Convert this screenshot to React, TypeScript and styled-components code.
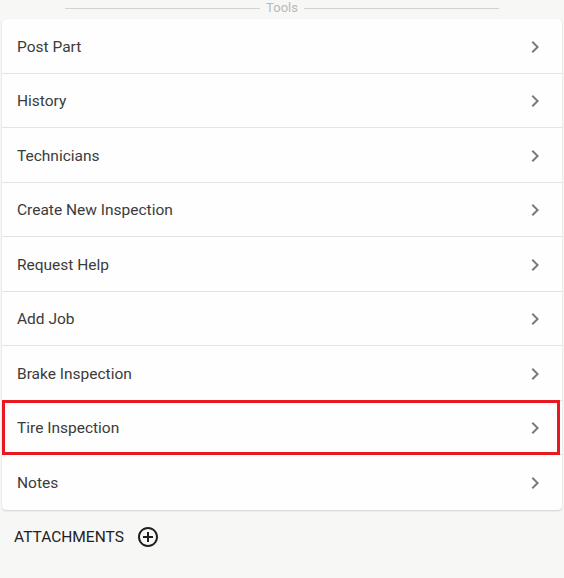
import React from "react";
import styled, { createGlobalStyle } from "styled-components";

const Global = createGlobalStyle`
  html, body { margin: 0; padding: 0; background: #f7f7f6; }
  body { font-family: Roboto, "Liberation Sans", sans-serif; }
`;

const Page = styled.div`
  width: 564px;
  height: 578px;
  display: flex;
  flex-direction: column;
  background: #f7f7f6;
`;

const SectionHeader = styled.div`
  width: 434px;
  height: 16px;
  margin: 0 auto 3px;
  display: flex;
  align-items: center;
  gap: 6px;
  color: #b9b9b9;
  font-size: 13px;
  line-height: 16px;
`;

const Rule = styled.div`
  flex: 1;
  height: 1px;
  background: #d2d2d2;
`;

const Card = styled.div`
  margin: 0 2px;
  background: #fdfefd;
  border-radius: 4px;
  box-shadow: 0 1px 2px rgba(0, 0, 0, 0.14), 0 0 1px rgba(0, 0, 0, 0.12);
  display: flex;
  flex-direction: column;
`;

const Row = styled.div<{ $last?: boolean }>`
  position: relative;
  box-sizing: border-box;
  height: 54.5px;
  display: flex;
  align-items: center;
  justify-content: space-between;
  padding: 2px 15px 0 15px;
  border-bottom: ${(p) => (p.$last ? "none" : "1px solid #e3e4e3")};
  font-size: 15.5px;
  color: #3b3b3b;
`;

const Highlight = styled.div`
  position: absolute;
  top: -1px;
  left: 0;
  right: 2px;
  bottom: -1px;
  border: 3px solid #e81720;
  pointer-events: none;
`;

const Chevron = styled.svg`
  width: 24px;
  height: 24px;
  fill: #7a7a7a;
  flex: none;
`;

const Attachments = styled.div`
  display: flex;
  align-items: center;
  gap: 12px;
  padding: 15px 0 0 14px;
  font-size: 15.5px;
  color: #222;
  text-transform: uppercase;
`;

const PlusIcon = styled.svg`
  width: 24px;
  height: 24px;
  fill: #1f1f1f;
`;

const items = [
  "Post Part",
  "History",
  "Technicians",
  "Create New Inspection",
  "Request Help",
  "Add Job",
  "Brake Inspection",
  "Tire Inspection",
  "Notes",
];

export default function App() {
  return (
    <Page>
      <Global />
      <SectionHeader>
        <Rule />
        <span>Tools</span>
        <Rule />
      </SectionHeader>
      <Card>
        {items.map((label, i) => (
          <Row key={label} $last={i === items.length - 1}>
            <span>{label}</span>
            <Chevron viewBox="0 0 24 24">
              <path d="M10 6 8.59 7.41 13.17 12l-4.58 4.59L10 18l6-6z" />
            </Chevron>
            {label === "Tire Inspection" && <Highlight />}
          </Row>
        ))}
      </Card>
      <Attachments>
        <span>Attachments</span>
        <PlusIcon viewBox="0 0 24 24">
          <path d="M13 7h-2v4H7v2h4v4h2v-4h4v-2h-4V7zm-1-5C6.48 2 2 6.48 2 12s4.48 10 10 10 10-4.48 10-10S17.52 2 12 2zm0 18c-4.41 0-8-3.59-8-8s3.59-8 8-8 8 3.59 8 8-3.59 8-8 8z" />
        </PlusIcon>
      </Attachments>
    </Page>
  );
}
